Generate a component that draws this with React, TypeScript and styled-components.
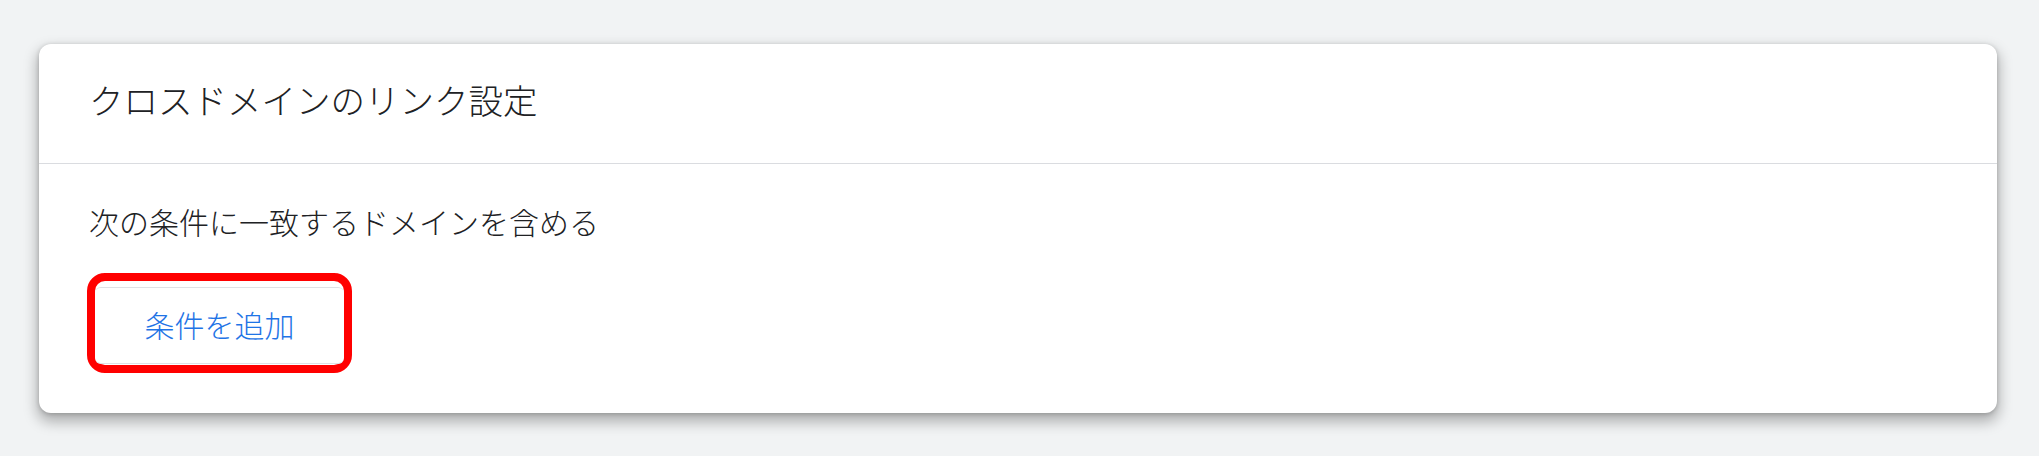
import styled, { createGlobalStyle } from "styled-components";

const GlobalStyle = createGlobalStyle`
  html, body {
    margin: 0;
    padding: 0;
    background: #f1f3f4;
  }
  body {
    font-family: "Noto Sans CJK JP", "Noto Sans", sans-serif;
  }
`;

const Page = styled.div`
  box-sizing: border-box;
  min-height: 456px;
  padding: 44px 42px 43px 39px;
`;

const Card = styled.section`
  background: #ffffff;
  border-radius: 12px;
  box-shadow: 0 1px 4px rgba(0, 0, 0, 0.18), 0 7px 14px 2px rgba(0, 0, 0, 0.28);
`;

const CardHeader = styled.header`
  box-sizing: border-box;
  height: 120px;
  padding: 35px 50px 0;
  border-bottom: 1px solid #dadce0;
`;

const Title = styled.h2`
  margin: 0;
  font-size: 34.5px;
  line-height: 40px;
  font-weight: 300;
  color: #202124;
`;

const CardBody = styled.div`
  padding: 37px 50px 40px 48px;
`;

const Label = styled.p`
  margin: 0 0 32px 2px;
  font-size: 30px;
  line-height: 40px;
  font-weight: 300;
  color: #202124;
`;

const Highlight = styled.div`
  display: inline-flex;
  box-sizing: border-box;
  width: 265px;
  height: 100px;
  padding: 6px 0 1px;
  border: 8px solid #ff0000;
  border-radius: 18px;
`;

const AddButton = styled.button`
  flex: 1;
  border: none;
  border-top: 1px solid #dfe1e5;
  border-bottom: 1px solid #dfe1e5;
  border-radius: 6px;
  background: #ffffff;
  color: #1f74e6;
  font-family: "Noto Sans CJK JP", "Noto Sans", sans-serif;
  font-size: 30px;
  font-weight: 300;
  padding: 0 0 4px;
  cursor: pointer;
`;

export default function App() {
  return (
    <>
      <GlobalStyle />
      <Page>
        <Card>
          <CardHeader>
            <Title>クロスドメインのリンク設定</Title>
          </CardHeader>
          <CardBody>
            <Label>次の条件に一致するドメインを含める</Label>
            <Highlight>
              <AddButton>条件を追加</AddButton>
            </Highlight>
          </CardBody>
        </Card>
      </Page>
    </>
  );
}
